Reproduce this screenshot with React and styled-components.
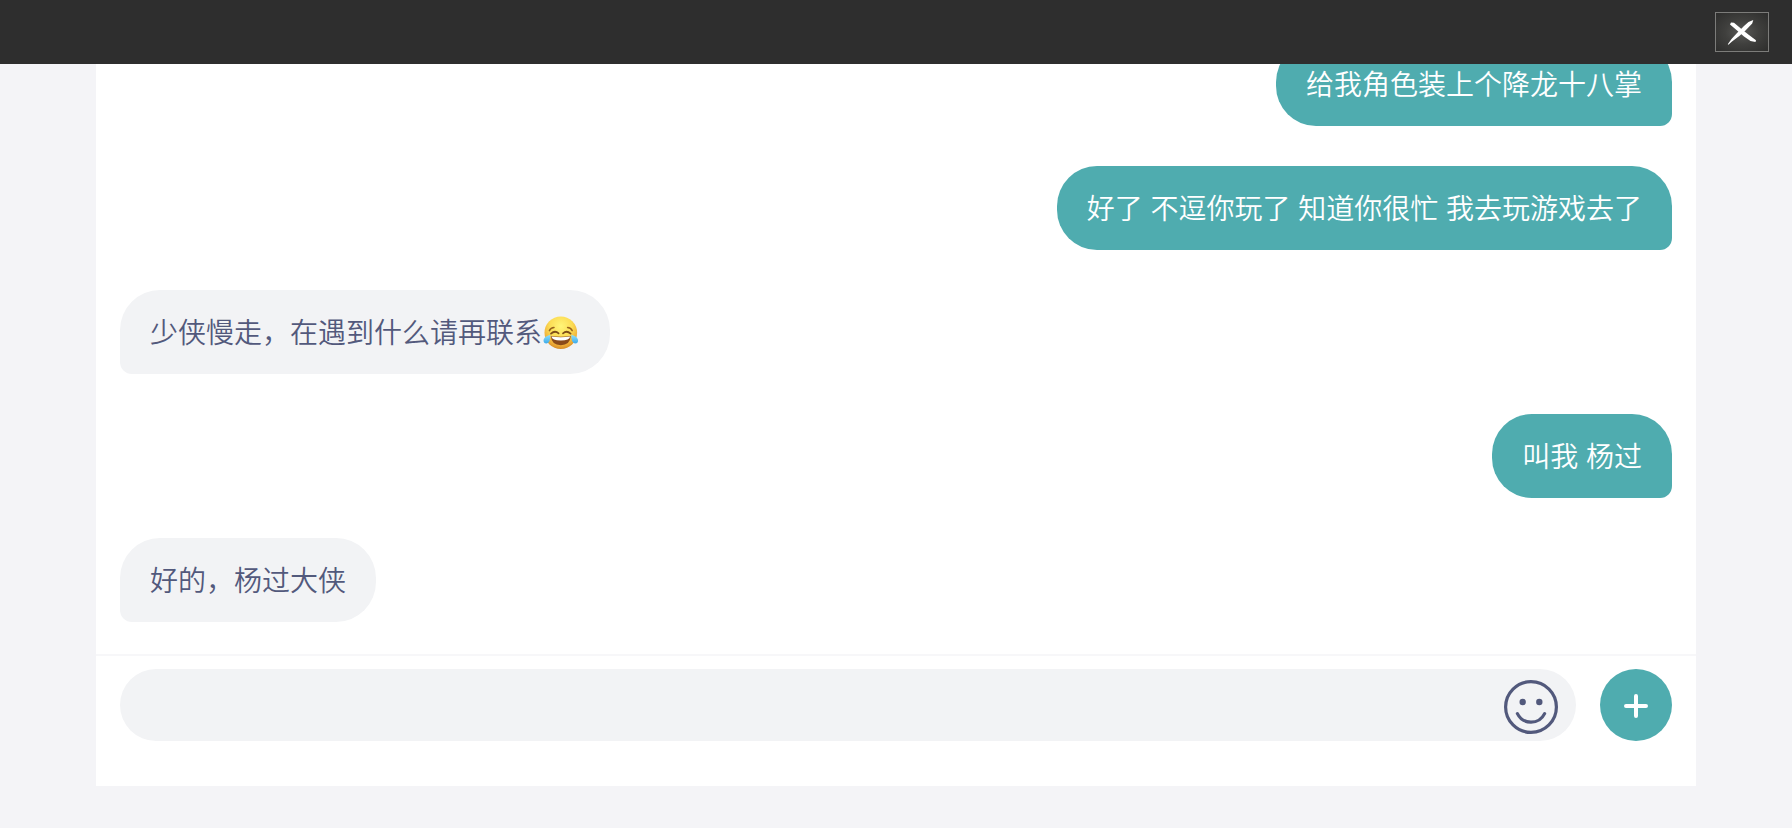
import React, { useState } from 'react';
import styled, { createGlobalStyle } from 'styled-components';

const GlobalStyle = createGlobalStyle`
  * {
    box-sizing: border-box;
  }

  body {
    margin: 0;
    background-color: #f4f4f7;
    font-family: 'Liberation Sans', 'Noto Sans CJK SC', sans-serif;
  }
`;

const Page = styled.div`
  display: flex;
  flex-direction: column;
  height: 100vh;
  padding-bottom: 42px;
`;

const Header = styled.header`
  display: flex;
  flex-shrink: 0;
  align-items: center;
  justify-content: flex-end;
  height: 64px;
  padding: 0 23px;
  background-color: #2e2e2e;
`;

const CloseButton = styled.button`
  width: 54px;
  height: 40px;
  padding: 0;
  border: 1px solid #7c7c7a;
  background: radial-gradient(ellipse at center, #5a5a58 0%, #40403e 45%, #2d2d2c 100%);
  cursor: pointer;

  svg {
    display: block;
  }
`;

const Chat = styled.main`
  display: flex;
  flex: 1;
  flex-direction: column;
  min-height: 0;
  margin: 0 96px;
  background-color: #fff;
`;

const Messages = styled.ul`
  display: flex;
  flex: 1;
  flex-direction: column;
  justify-content: flex-end;
  gap: 40px;
  min-height: 0;
  margin: 0;
  padding: 0 24px 32px;
  overflow: hidden;
  list-style: none;
`;

const Bubble = styled.li`
  display: flex;
  flex-shrink: 0;
  align-items: center;
  align-self: ${({ $mine }) => ($mine ? 'flex-end' : 'flex-start')};
  padding: 22px 30px 18px;
  border-radius: ${({ $mine }) => ($mine ? '40px 40px 12px 40px' : '40px 40px 40px 12px')};
  background-color: ${({ $mine }) => ($mine ? '#4facaf' : '#f2f3f5')};
  color: ${({ $mine }) => ($mine ? '#fff' : '#52597c')};
  font-size: 28px;
  font-weight: 350;
  line-height: 44px;
`;

const Emoji = styled.svg`
  width: 38px;
  height: 38px;
`;

const Composer = styled.form`
  display: flex;
  flex-shrink: 0;
  gap: 24px;
  padding: 13px 24px 45px;
  border-top: 2px solid #f7f7f9;
`;

const Field = styled.div`
  display: flex;
  flex: 1;
  height: 72px;
  padding: 11px 18px 7px 30px;
  border-radius: 36px;
  background-color: #f2f3f5;
`;

const TextInput = styled.input`
  flex: 1;
  min-width: 0;
  padding: 0;
  border: none;
  outline: none;
  background: transparent;
  color: #52597c;
  font-family: inherit;
  font-size: 28px;
`;

const IconButton = styled.button`
  width: 54px;
  height: 54px;
  padding: 0;
  border: none;
  background: transparent;
  cursor: pointer;

  svg {
    display: block;
  }
`;

const AddButton = styled.button`
  display: flex;
  align-items: center;
  justify-content: center;
  width: 72px;
  height: 72px;
  padding: 2px 0 0;
  border: none;
  border-radius: 50%;
  background-color: #4facaf;
  cursor: pointer;
`;

const BrushCross = () => (
  <svg width="52" height="38" viewBox="1 1 52 38" fill="#fff">
    <path d="M15 12.5 L16 10.6 L19 10.8 L27 17.5 L34 23 L41 28.2 L40.5 30 L35.5 29 L29 24.5 L21.5 18 Z" />
    <path d="M38.3 8 L37.2 11.5 L30.5 18.5 L24 24.2 L17 29.4 L13.4 32.8 L12.8 32.2 L16.5 27 L22.5 20.5 L29 14 L33.5 10 Z" />
  </svg>
);

const Smile = () => (
  <svg width="54" height="54" viewBox="0 0 54 54" fill="none">
    <circle cx="27" cy="27" r="25.4" stroke="#52597c" strokeWidth="3.2" />
    <circle cx="18.7" cy="22" r="3.2" fill="#52597c" />
    <circle cx="35.3" cy="22" r="3.2" fill="#52597c" />
    <path
      d="M13.4 33.6 C19 45 35 45 40.6 33.6"
      stroke="#52597c"
      strokeWidth="3.2"
      strokeLinecap="round"
    />
  </svg>
);

const Plus = () => (
  <svg width="24" height="24" viewBox="0 0 24 24">
    <path d="M12 2 V22 M2 12 H22" stroke="#fff" strokeWidth="4" strokeLinecap="round" />
  </svg>
);

const TearsOfJoy = () => (
  <Emoji viewBox="0 0 38 38" role="img" aria-label="笑哭">
    <defs>
      <radialGradient id="face" cx="0.5" cy="0.3" r="0.7">
        <stop offset="0" stopColor="#fff578" />
        <stop offset="0.5" stopColor="#fcdc55" />
        <stop offset="0.82" stopColor="#f0ae38" />
        <stop offset="1" stopColor="#d58a26" />
      </radialGradient>
      <linearGradient id="tear" x1="0" y1="0" x2="0" y2="1">
        <stop offset="0" stopColor="#8fe0fb" />
        <stop offset="1" stopColor="#3ba9ea" />
      </linearGradient>
    </defs>
    <circle cx="18.8" cy="17.8" r="16.3" fill="url(#face)" />
    <path
      d="M7.4 15.6 Q8.8 12.8 12 12.6 M30.2 15.6 Q28.8 12.8 25.6 12.6"
      fill="none"
      stroke="#98631c"
      strokeWidth="1.5"
      strokeLinecap="round"
    />
    <path
      d="M9 18.6 Q13 15 16.6 18.4 M21 18.4 Q24.6 15 28.6 18.6"
      fill="none"
      stroke="#7d4d18"
      strokeWidth="1.7"
      strokeLinecap="round"
    />
    <path d="M8.8 21 Q18.8 22.6 28.8 21 Q28 30.2 18.8 30.2 Q9.6 30.2 8.8 21 Z" fill="#8a4a1a" />
    <path d="M9.4 21.4 Q18.8 23 28.2 21.4 Q27.6 25.2 18.8 25.4 Q10 25.2 9.4 21.4 Z" fill="#fff" />
    <path d="M8.2 19.8 Q8.6 28.2 4.6 28.6 Q1 28.4 1.6 24.8 Q2.4 21.4 8.2 19.8 Z" fill="url(#tear)" />
    <path d="M29.4 19.8 Q29 28.2 33 28.6 Q36.6 28.4 36 24.8 Q35.2 21.4 29.4 19.8 Z" fill="url(#tear)" />
  </Emoji>
);

const messages = [
  { id: 1, mine: true, text: '给我角色装上个降龙十八掌' },
  { id: 2, mine: true, text: '好了 不逗你玩了 知道你很忙 我去玩游戏去了' },
  { id: 3, mine: false, text: '少侠慢走，在遇到什么请再联系', laughing: true },
  { id: 4, mine: true, text: '叫我 杨过' },
  { id: 5, mine: false, text: '好的，杨过大侠' },
];

const App = () => {
  const [draft, setDraft] = useState('');

  return (
    <Page>
      <GlobalStyle />
      <Header>
        <CloseButton type="button" aria-label="关闭">
          <BrushCross />
        </CloseButton>
      </Header>

      <Chat>
        <Messages>
          {messages.map(({ id, mine, text, laughing }) => (
            <Bubble key={id} $mine={mine}>
              {text}
              {laughing && <TearsOfJoy />}
            </Bubble>
          ))}
        </Messages>

        <Composer onSubmit={(e) => e.preventDefault()}>
          <Field>
            <TextInput
              type="text"
              aria-label="输入消息"
              value={draft}
              onChange={(e) => setDraft(e.target.value)}
            />
            <IconButton type="button" aria-label="表情">
              <Smile />
            </IconButton>
          </Field>
          <AddButton type="button" aria-label="更多">
            <Plus />
          </AddButton>
        </Composer>
      </Chat>
    </Page>
  );
};

export default App;
